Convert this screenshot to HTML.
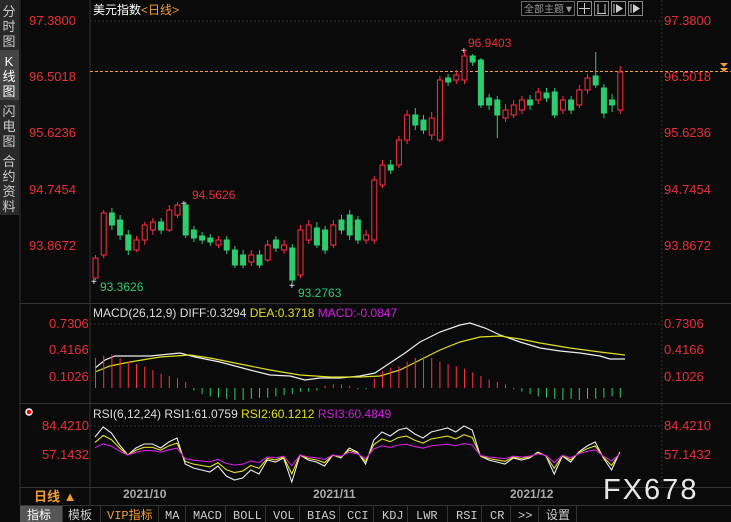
<!DOCTYPE html>
<html><head><meta charset="utf-8"><style>
body{margin:0;width:731px;height:522px;background:#0a0a0a;overflow:hidden;font-family:"Liberation Sans","Noto Sans CJK SC",sans-serif;}
svg{position:absolute;left:0;top:0}
</style></head><body>
<svg id="s" width="731" height="522" xmlns="http://www.w3.org/2000/svg" font-family="Liberation Sans, Noto Sans CJK SC, sans-serif">
<rect width="731" height="522" fill="#0a0a0a"/>
<rect x="0" y="0" width="19" height="215" fill="#2a2a2a"/>
<rect x="0" y="50" width="19" height="50" fill="#444"/>
<g fill="#ccc" font-size="13" text-anchor="middle">
<text x="9" y="16">分</text><text x="9" y="31">时</text><text x="9" y="46">图</text>
<text x="9" y="66" fill="#fff">K</text><text x="9" y="81" fill="#fff">线</text><text x="9" y="96" fill="#fff">图</text>
<text x="9" y="116">闪</text><text x="9" y="131">电</text><text x="9" y="146">图</text>
<text x="9" y="166">合</text><text x="9" y="181">约</text><text x="9" y="196">资</text><text x="9" y="211">料</text>
</g>
<line x1="20" y1="0" x2="20" y2="505" stroke="#333"/>
<g stroke="#333">
<line x1="90" y1="0" x2="90" y2="505"/>
<line x1="20" y1="303.5" x2="731" y2="303.5"/>
<line x1="20" y1="403.5" x2="731" y2="403.5"/>
<line x1="20" y1="487.5" x2="731" y2="487.5"/>
<line x1="20" y1="505.5" x2="731" y2="505.5"/>
</g>
<g stroke="#333" stroke-dasharray="2,2">
<line x1="662" y1="0" x2="662" y2="487"/>
<line x1="90" y1="21" x2="662" y2="21"/>
<line x1="90" y1="324" x2="662" y2="324"/>
<line x1="90" y1="426" x2="662" y2="426"/>
</g>
<line x1="90" y1="71.5" x2="731" y2="71.5" stroke="#f0a030" stroke-dasharray="3,2"/>
<polygon points="720,63 728,63 724,67" fill="#f0a030"/><polygon points="720,68 728,68 724,72" fill="#f0a030"/>
<g fill="#e8303a" font-size="13">
<text x="29" y="25">97.3800</text><text x="29" y="81">96.5018</text><text x="29" y="137">95.6236</text><text x="29" y="194">94.7454</text><text x="29" y="250">93.8672</text>
<text x="664" y="25">97.3800</text><text x="664" y="81">96.5018</text><text x="664" y="137">95.6236</text><text x="664" y="194">94.7454</text><text x="664" y="250">93.8672</text>
<text x="49" y="328">0.7306</text><text x="49" y="354">0.4166</text><text x="49" y="381">0.1026</text>
<text x="664" y="328">0.7306</text><text x="664" y="354">0.4166</text><text x="664" y="381">0.1026</text>
<text x="42" y="430">84.4210</text><text x="42" y="459">57.1432</text>
<text x="664" y="430">84.4210</text><text x="664" y="459">57.1432</text>
</g>
<circle cx="29" cy="412" r="3" fill="#e00" stroke="#fff" stroke-width="1.5"/>
<text x="93" y="14" font-size="12" fill="#fff">美元指数<tspan fill="#f0a030">&lt;日线&gt;</tspan></text>
<rect x="521.5" y="1.5" width="53" height="14" fill="none" stroke="#666"/>
<text x="524" y="12.5" font-size="10" fill="#999">全部主题▼</text>
<g fill="none" stroke="#888"><rect x="577.5" y="1.5" width="14" height="14"/><rect x="594.5" y="1.5" width="14" height="14"/><rect x="611.5" y="1.5" width="14" height="14"/><rect x="628.5" y="1.5" width="14" height="14"/></g>
<g stroke="#ccc" fill="none"><path d="M584.5 3v11M579 8.5h11"/><path d="M598 4v9M605 4v9M597 13.5h9"/><path d="M614 4v9"/><path d="M631 4v9"/></g>
<g fill="#ccc"><polygon points="616,4 623,8.5 616,13"/><polygon points="633,4 640,8.5 633,13"/></g>
<g font-size="12">
<text x="468" y="47" fill="#e8303a">96.9403</text>
<text x="192" y="199" fill="#e8303a">94.5626</text>
<text x="100" y="291" fill="#2ecc71">93.3626</text>
<text x="298" y="297" fill="#2ecc71">93.2763</text>
<text x="93" y="317"><tspan fill="#ddd">MACD(26,12,9) DIFF:0.3294 </tspan><tspan fill="#e0e020">DEA:0.3718 </tspan><tspan fill="#d020e0">MACD:-0.0847</tspan></text>
<text x="93" y="418"><tspan fill="#ddd">RSI(6,12,24) RSI1:61.0759 </tspan><tspan fill="#e0e020">RSI2:60.1212 </tspan><tspan fill="#d020e0">RSI3:60.4849</tspan></text>
</g>
<g fill="#fff" font-size="10"><text x="461" y="54">+</text><text x="181" y="207">+</text><text x="91" y="285">+</text><text x="289" y="289">+</text></g>
<g id="c"></g>
<text x="34" y="501" font-size="13" fill="#f0a030" font-weight="bold">日线 ▲</text>
<g fill="#aaa" font-size="12" font-weight="bold"><text x="123" y="498">2021/10</text><text x="313" y="498">2021/11</text><text x="510" y="498">2021/12</text></g>
<text x="603" y="499" font-size="29" fill="#e8e8e8" letter-spacing="2">FX678</text>
<rect x="20" y="506" width="42" height="16" fill="#555"/>
<g font-size="12" fill="#ccc" font-family="Liberation Mono, Noto Sans CJK SC, monospace">
<text x="27" y="519" fill="#fff">指标</text><text x="68" y="519">模板</text><text x="107" y="519" fill="#f0a030">VIP指标</text>
<text x="165" y="519">MA</text><text x="193" y="519">MACD</text><text x="233" y="519">BOLL</text><text x="273" y="519">VOL</text><text x="307" y="519">BIAS</text><text x="347" y="519">CCI</text><text x="382" y="519">KDJ</text><text x="416" y="519">LWR</text><text x="456" y="519">RSI</text><text x="490" y="519">CR</text><text x="518" y="519">&gt;&gt;</text><text x="546" y="519">设置</text>
</g>
<g stroke="#333"><line x1="62.5" y1="506" x2="62.5" y2="522"/><line x1="100.5" y1="506" x2="100.5" y2="522"/><line x1="158.5" y1="506" x2="158.5" y2="522"/><line x1="185.5" y1="506" x2="185.5" y2="522"/><line x1="225.5" y1="506" x2="225.5" y2="522"/><line x1="265.5" y1="506" x2="265.5" y2="522"/><line x1="299.5" y1="506" x2="299.5" y2="522"/><line x1="339.5" y1="506" x2="339.5" y2="522"/><line x1="373.5" y1="506" x2="373.5" y2="522"/><line x1="407.5" y1="506" x2="407.5" y2="522"/><line x1="447.5" y1="506" x2="447.5" y2="522"/><line x1="481.5" y1="506" x2="481.5" y2="522"/><line x1="510.5" y1="506" x2="510.5" y2="522"/><line x1="538.5" y1="506" x2="538.5" y2="522"/><line x1="576.5" y1="506" x2="576.5" y2="522"/></g>
</svg>
<script>
var d=[[258,278,255,280],[213,255,210,258],[225,213,208,230],[235,220,215,240],[250,235,230,255],[240,250,236,252],[225,240,222,245],[222,230,218,235],[230,222,218,234],[210,230,205,232],[205,215,202,218],[235,205,202,238],[238,230,226,242],[240,236,232,244],[242,238,234,246],[240,245,236,248],[250,240,236,254],[265,250,246,268],[265,255,250,268],[255,262,250,266],[265,255,250,268],[245,260,240,262],[248,240,236,252],[245,250,240,254],[280,248,244,283],[230,275,225,278],[225,240,220,244],[245,228,222,248],[250,230,226,254],[225,245,220,248],[230,220,215,234],[235,215,210,240],[240,220,216,244],[235,240,230,244],[180,240,176,244],[165,185,160,188],[170,165,160,174],[140,165,136,168],[115,140,110,144],[125,115,108,130],[130,120,115,134],[118,135,112,140],[80,140,76,142],[82,78,74,86],[75,80,70,84],[56,80,50,84],[62,56,54,66],[105,60,58,108],[105,98,94,110],[115,100,96,138],[110,118,104,122],[105,115,100,118],[100,110,96,114],[105,100,95,110],[92,100,88,104],[98,93,88,102],[115,92,88,118],[100,110,96,114],[110,100,96,114],[90,105,85,108],[78,90,74,94],[85,76,52,88],[113,88,84,118],[105,100,94,112],[72,110,66,114]];
var g='',n=d.length;
for(var i=0;i<n;i++){var x=95+i*8.2,o=d[i][1],c=d[i][0];var up=c<o;var col=up?'#ff3040':'#2ecc71';
var t=Math.min(o,c),h=Math.max(Math.abs(o-c),1);
g+='<line x1="'+(x+0.5)+'" y1="'+d[i][2]+'" x2="'+(x+0.5)+'" y2="'+d[i][3]+'" stroke="'+col+'"/>';
g+='<rect x="'+(x-2)+'" y="'+t+'" width="5" height="'+h+'" fill="'+(up?'#0a0a0a':col)+'" stroke="'+col+'"/>';}
function curve(pts){var s='';for(var i=0;i<pts.length;i++)s+=(i?'L':'M')+pts[i][0]+' '+pts[i][1];return s;}
var W=[[95,368],[105,360],[115,356],[130,356],[150,356],[180,353],[195,357],[220,362],[250,370],[270,375],[290,376],[305,380],[320,378],[340,378],[360,376],[375,373],[390,363],[405,353],[420,342],[440,332],[460,325],[470,323],[485,328],[500,335],[520,342],[540,348],[560,351],[580,353],[600,356],[610,359],[625,359]];
var Y=[[95,372],[110,366],[130,362],[160,357],[190,355],[210,358],[240,364],[270,370],[300,375],[330,377],[360,377],[380,376],[400,370],[420,360],[440,350],[460,342],[480,337],[500,336],[520,339],[540,343],[570,348],[600,352],[625,355]];
g+='<path d="'+curve(W)+'" fill="none" stroke="#eee" stroke-width="1.2"/>';
g+='<path d="'+curve(Y)+'" fill="none" stroke="#e0e020" stroke-width="1.2"/>';
var hv=[25,27,28,25,22,20,18,15,12,10,8,5,-2,-5,-7,-8,-9,-10,-10,-9,-8,-8,-7,-6,-5,-3,-3,-2,2,3,3,2,-1,-1,8,14,17,18,22,25,26,25,22,20,18,16,13,10,7,5,3,-1,-3,-5,-7,-8,-9,-10,-9,-10,-9,-9,-8,-7,-8];
for(var i=0;i<n;i++){var x=95.5+i*8.2,v=hv[i]||0;var b=388;
g+='<line x1="'+x+'" y1="'+b+'" x2="'+x+'" y2="'+(b-v*1.2)+'" stroke="'+(v>0?'#ff3040':'#2ecc71')+'"/>';}
function rs(a,off,amp,col){var s='';for(var i=0;i<n;i++){var x=95+i*8.2;s+=(i?'L':'M')+x.toFixed(1)+' '+(off+(a[i]-off)*amp).toFixed(1);}g+='<path d="'+s+'" fill="none" stroke="'+col+'" stroke-width="1.1"/>';}
var r=[437,427,433,445,455,448,444,444,448,442,438,464,468,470,472,466,476,480,478,470,474,460,462,458,482,455,460,462,466,455,458,448,452,464,440,432,436,430,428,434,438,432,430,428,432,426,430,456,460,462,464,458,460,458,452,456,474,456,462,452,446,442,458,470,452];
rs(r,455,1,'#eee');rs(r,455,0.7,'#e0e020');rs(r,455,0.4,'#d020e0');
document.getElementById('c').innerHTML=g;
</script>
</body></html>
